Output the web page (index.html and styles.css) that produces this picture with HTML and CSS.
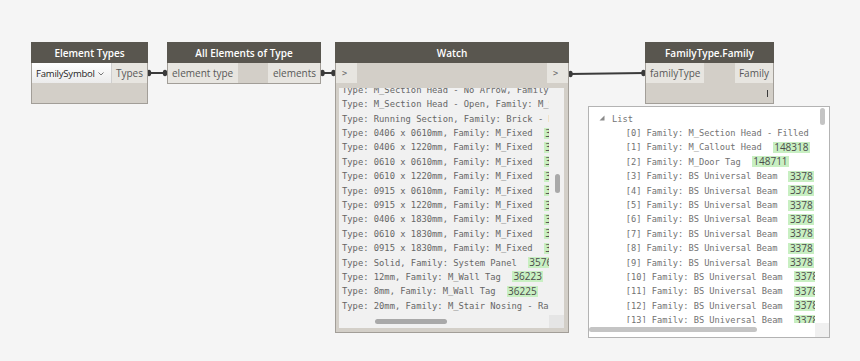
FILE: index.html
```html
<!DOCTYPE html>
<html>
<head>
<meta charset="utf-8">
<title>Dynamo graph</title>
<link rel="stylesheet" href="styles.css">
</head>
<body>
<div class="canvas">
  <svg class="wires" width="860" height="361" viewBox="0 0 860 361">
    <g stroke="#3a3a3a" stroke-width="2" fill="none">
      <line x1="147" y1="73" x2="167" y2="73"/>
      <line x1="321" y1="73" x2="335" y2="73"/>
      <line x1="569" y1="74" x2="645" y2="73"/>
    </g>
    <g fill="#3a3a3a">
      <ellipse cx="149" cy="73" rx="2.2" ry="3.2"/>
      <ellipse cx="165" cy="73" rx="2.2" ry="3.2"/>
      <ellipse cx="322.5" cy="73" rx="2.2" ry="3.2"/>
      <ellipse cx="333.5" cy="73" rx="2.2" ry="3.2"/>
      <ellipse cx="570.5" cy="74" rx="2.2" ry="3.2"/>
      <ellipse cx="643.5" cy="73" rx="2.2" ry="3.2"/>
    </g>
  </svg>

  <div class="node n-types">
    <div class="node-head">Element Types</div>
    <div class="ports">
      <div class="dropdown">
        <span class="dd-text">FamilySymbol</span>
        <svg class="chev" width="6" height="4" viewBox="0 0 6 4"><path d="M0.5 0.5 L3 3 L5.5 0.5" stroke="#777" stroke-width="1" fill="none"/></svg>
      </div>
      <div class="port out w-types">Types</div>
    </div>
    <div class="node-body"></div>
  </div>

  <div class="node n-all">
    <div class="node-head">All Elements of Type</div>
    <div class="ports">
      <div class="port in w-eltype">element type</div>
      <div class="port out w-elements">elements</div>
    </div>
  </div>

  <div class="node n-watch">
    <div class="node-head">Watch</div>
    <div class="ports">
      <div class="port in arrow">&gt;</div>
      <div class="port out arrow">&gt;</div>
    </div>
    <div class="watch-body">
      <div class="scrollview watch-view">
        <div class="viewport">
          <div class="rows watch-rows">
            <div class="row"><span class="txt">Type: M_Section Head - No Arrow, Family: M_Section Head</span></div>
            <div class="row"><span class="txt">Type: M_Section Head - Open, Family: M_Section Head</span></div>
            <div class="row"><span class="txt">Type: Running Section, Family: Brick - Running</span></div>
            <div class="row"><span class="txt">Type: 0406 x 0610mm, Family: M_Fixed</span><span class="badge">32940</span></div>
            <div class="row"><span class="txt">Type: 0406 x 1220mm, Family: M_Fixed</span><span class="badge">32942</span></div>
            <div class="row"><span class="txt">Type: 0610 x 0610mm, Family: M_Fixed</span><span class="badge">32944</span></div>
            <div class="row"><span class="txt">Type: 0610 x 1220mm, Family: M_Fixed</span><span class="badge">32946</span></div>
            <div class="row"><span class="txt">Type: 0915 x 0610mm, Family: M_Fixed</span><span class="badge">32948</span></div>
            <div class="row"><span class="txt">Type: 0915 x 1220mm, Family: M_Fixed</span><span class="badge">32950</span></div>
            <div class="row"><span class="txt">Type: 0406 x 1830mm, Family: M_Fixed</span><span class="badge">32952</span></div>
            <div class="row"><span class="txt">Type: 0610 x 1830mm, Family: M_Fixed</span><span class="badge">32954</span></div>
            <div class="row"><span class="txt">Type: 0915 x 1830mm, Family: M_Fixed</span><span class="badge">32956</span></div>
            <div class="row"><span class="txt">Type: Solid, Family: System Panel</span><span class="badge">35761</span></div>
            <div class="row"><span class="txt">Type: 12mm, Family: M_Wall Tag</span><span class="badge">36223</span></div>
            <div class="row"><span class="txt">Type: 8mm, Family: M_Wall Tag</span><span class="badge">36225</span></div>
            <div class="row"><span class="txt">Type: 20mm, Family: M_Stair Nosing - Rail</span><span class="badge">36530</span></div>
          </div>
        </div>
        <div class="vbar"><div class="thumb watch-vthumb"></div></div>
        <div class="hbar"><div class="thumb watch-hthumb"></div></div>
        <div class="corner watch-corner"></div>
      </div>
    </div>
  </div>

  <div class="node n-family">
    <div class="node-head">FamilyType.Family</div>
    <div class="ports">
      <div class="port in w-famtype">familyType</div>
      <div class="port out w-family">Family</div>
    </div>
    <div class="node-body fam-body"><span class="lace"></span></div>
  </div>

  <div class="preview">
    <div class="scrollview preview-view">
      <div class="viewport">
        <div class="rows preview-rows">
          <div class="list-head">
            <svg class="tri" width="6" height="6" viewBox="0 0 6 6"><polygon points="5.5,0.5 5.5,5.5 0.5,5.5" fill="#8a8a8a"/></svg>
            <span>List</span>
          </div>
          <div class="row item"><span class="txt">[0] Family: M_Section Head - Filled</span><span class="badge">148316</span></div>
          <div class="row item"><span class="txt">[1] Family: M_Callout Head</span><span class="badge">148318</span></div>
          <div class="row item"><span class="txt">[2] Family: M_Door Tag</span><span class="badge">148711</span></div>
          <div class="row item"><span class="txt">[3] Family: BS Universal Beam</span><span class="badge">3378</span></div>
          <div class="row item"><span class="txt">[4] Family: BS Universal Beam</span><span class="badge">3378</span></div>
          <div class="row item"><span class="txt">[5] Family: BS Universal Beam</span><span class="badge">3378</span></div>
          <div class="row item"><span class="txt">[6] Family: BS Universal Beam</span><span class="badge">3378</span></div>
          <div class="row item"><span class="txt">[7] Family: BS Universal Beam</span><span class="badge">3378</span></div>
          <div class="row item"><span class="txt">[8] Family: BS Universal Beam</span><span class="badge">3378</span></div>
          <div class="row item"><span class="txt">[9] Family: BS Universal Beam</span><span class="badge">3378</span></div>
          <div class="row item"><span class="txt">[10] Family: BS Universal Beam</span><span class="badge">33782</span></div>
          <div class="row item"><span class="txt">[11] Family: BS Universal Beam</span><span class="badge">33782</span></div>
          <div class="row item"><span class="txt">[12] Family: BS Universal Beam</span><span class="badge">33782</span></div>
          <div class="row item"><span class="txt">[13] Family: BS Universal Beam</span><span class="badge">33782</span></div>
        </div>
      </div>
      <div class="vbar"><div class="thumb preview-vthumb"></div></div>
      <div class="hbar"><div class="thumb preview-hthumb"></div></div>
      <div class="corner preview-corner"></div>
    </div>
  </div>
</div>
</body>
</html>
```

FILE: styles.css
```css
* { box-sizing: border-box; }

html, body {
  margin: 0;
  padding: 0;
}

body {
  width: 860px;
  height: 361px;
  overflow: hidden;
  background: #f5f5f5;
  font-family: "Open Sans", "Noto Sans", sans-serif;
}

.canvas {
  position: relative;
  width: 860px;
  height: 361px;
}

.wires {
  position: absolute;
  left: 0;
  top: 0;
}

/* ---------- nodes ---------- */
.node {
  position: absolute;
  top: 42px;
  display: flex;
  flex-direction: column;
  background: #d3cfc8;
  border: 1px solid #a29e98;
  border-top: none;
}

.node-head {
  height: 21px;
  margin: 0 -1px;
  display: flex;
  align-items: center;
  justify-content: center;
  background: #59564f;
  color: #ffffff;
  font-size: 10px;
  font-weight: 600;
}

.ports {
  height: 20px;
  display: flex;
  justify-content: space-between;
}

.port {
  height: 20px;
  display: flex;
  align-items: center;
  background: #e7e5e0;
  color: #585858;
  font-size: 10px;
}

.port.in { padding-left: 4px; }
.port.out { justify-content: flex-end; padding-right: 4px; }

.node-body { flex: 1; }

/* Element Types */
.n-types { left: 31px; width: 117px; height: 62px; }
.dropdown {
  width: 80px;
  height: 20px;
  display: flex;
  align-items: center;
  justify-content: space-between;
  padding: 0 7px 0 4px;
  background: linear-gradient(#ffffff, #ebebeb);
  border-right: 1px solid #cfcfcf;
  color: #1e1e1e;
  font-size: 9.5px;
}
.dd-text { letter-spacing: -0.2px; }
.chev { margin-top: 1px; flex-shrink: 0; }
.w-types { width: 35px; }

/* All Elements of Type */
.n-all { left: 167px; width: 154px; height: 42px; }
.w-eltype { width: 70px; }
.w-elements { width: 52px; }

/* Watch */
.n-watch { left: 335px; width: 234px; height: 291px; }
.port.arrow {
  width: 21px;
  padding: 0 0 0 6px;
  justify-content: flex-start;
  font-family: "DejaVu Sans Mono", monospace;
  font-size: 8.5px;
  color: #6a6a6a;
}
.watch-body {
  flex: 1;
  padding: 5px 4px 4px 3px;
  display: flex;
}

/* ---------- scroll views ---------- */
.scrollview {
  flex: 1;
  display: grid;
  overflow: hidden;
}
.viewport {
  overflow: hidden;
  position: relative;
}
.rows {
  font-family: "DejaVu Sans Mono", monospace;
  white-space: nowrap;
}
.row {
  height: 14.4px;
  display: flex;
  align-items: center;
  gap: 11px;
  overflow: visible;
}
.txt { flex-shrink: 0; line-height: 12px; }
.badge {
  flex-shrink: 0;
  height: 11px;
  line-height: 11px;
  padding: 0 1.5px;
  background: #c8efc2;
  color: #4c4c4c;
  font-family: "Open Sans", "Noto Sans", sans-serif;
  font-size: 10px;
}
.thumb {
  background: #b4b4b4;
  border-radius: 3px;
}

.watch-view {
  grid-template-columns: 210px 15px;
  grid-template-rows: 227px 13px;
  background: #f1f1f1;
}
.watch-rows {
  margin-top: -5.3px;
  padding-left: 3px;
  font-size: 8.8px;
  color: #666666;
}
.watch-vthumb {
  width: 5px;
  height: 19px;
  margin: 86px 0 0 6px;
  background: #a9a9a9;
}
.watch-hthumb {
  width: 72px;
  height: 4.5px;
  margin: 4px 0 0 36px;
  background: #a9a9a9;
}
.watch-corner { background: #e5e5e5; }

/* FamilyType.Family */
.n-family { left: 645px; width: 129px; height: 62px; }
.w-famtype { width: 58px; }
.w-family { width: 38px; }
.fam-body {
  display: flex;
  justify-content: flex-end;
  align-items: center;
  padding-right: 5px;
}
.lace {
  width: 1px;
  height: 7px;
  background: #3a3a3a;
}

/* ---------- preview bubble ---------- */
.preview {
  position: absolute;
  left: 588px;
  top: 106px;
  width: 242px;
  height: 232px;
  background: #ffffff;
  border: 1px solid #b3b3b3;
  display: flex;
}
.preview-view {
  grid-template-columns: 226px 14px;
  grid-template-rows: 216px 14px;
}
.preview-rows {
  padding-top: 4.5px;
  font-size: 8.7px;
  color: #727272;
}
.list-head {
  height: 14.4px;
  display: flex;
  align-items: center;
  gap: 7px;
  padding-left: 10px;
}
.tri { margin-top: -1px; }
.row.item { padding-left: 36.7px; }
.preview-vthumb {
  width: 5px;
  height: 17px;
  margin: 1px 0 0 5px;
  background: #c4c4c4;
}
.preview-hthumb {
  width: 168px;
  height: 5px;
  margin: 4px 0 0 0;
  background: #c4c4c4;
}
.preview-corner { background: #f0f0f0; }
```
